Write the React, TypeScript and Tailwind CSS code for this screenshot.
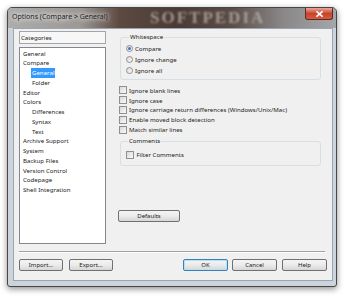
const categories: { label: string; indent?: boolean; selected?: boolean }[] = [
  { label: 'General' },
  { label: 'Compare' },
  { label: 'General', indent: true, selected: true },
  { label: 'Folder', indent: true },
  { label: 'Editor' },
  { label: 'Colors' },
  { label: 'Differences', indent: true },
  { label: 'Syntax', indent: true },
  { label: 'Text', indent: true },
  { label: 'Archive Support' },
  { label: 'System' },
  { label: 'Backup Files' },
  { label: 'Version Control' },
  { label: 'Codepage' },
  { label: 'Shell Integration' },
];

const options = [
  'Ignore blank lines',
  'Ignore case',
  'Ignore carriage return differences (Windows/Unix/Mac)',
  'Enable moved block detection',
  'Match similar lines',
];

function Checkbox() {
  return (
    <span className="w-[8px] h-[8px] shrink-0 border border-[#8f8f8f] bg-gradient-to-br from-[#d8d8d8] to-[#fbfbfb]" />
  );
}

function Radio({ checked }: { checked?: boolean }) {
  return (
    <span className="w-[7px] h-[7px] shrink-0 rounded-full border border-[#8f8f8f] bg-gradient-to-br from-[#d8d8d8] to-[#fbfbfb] flex items-center justify-center">
      {checked && <span className="w-[3px] h-[3px] rounded-full bg-[#3d78c6]" />}
    </span>
  );
}

function Button({ children, primary, className = '' }: { children: string; primary?: boolean; className?: string }) {
  return (
    <button
      className={`h-[12px] flex items-center justify-center rounded-[2px] border text-[6px] leading-none text-[#1a1a1a] bg-gradient-to-b from-[#f4f4f4] via-[#ebebeb] to-[#d6d6d6] ${
        primary ? 'border-[#3c7fb1] shadow-[inset_0_0_0_1px_#b9e1f5]' : 'border-[#707070]'
      } ${className}`}
    >
      {children}
    </button>
  );
}

export default function App() {
  return (
    <div
      className="w-[350px] h-[300px] bg-white overflow-hidden pt-[7px] pl-[7px] text-[6.1px] text-[#1b1b1b]"
      style={{ fontFamily: '"Noto Sans", "DejaVu Sans", sans-serif' }}
    >
      <div className="w-[330px] h-[280px] flex flex-col border border-[#474747] rounded-t-[5px] rounded-b-[3px] bg-[#cdd3da] shadow-[0_2px_6px_rgba(0,0,0,0.45)]">
        {/* title bar */}
        <div className="relative h-[20px] shrink-0 flex items-start rounded-t-[4px] overflow-hidden bg-[linear-gradient(to_right,#adadad_0%,#9c9894_22%,#5c4a41_34%,#4a3a33_52%,#5a4c46_68%,#8a8888_84%,#a3a6aa_100%)]">
          <span className="absolute left-[142px] top-[1px] text-[17px] leading-none font-bold tracking-[2px] text-[#bdb6b2] opacity-75 blur-[0.9px]" style={{ fontFamily: '"Liberation Serif", serif' }}>
            SOFTPEDIA
          </span>
          <span className="relative ml-[4px] mt-[4px] text-[7px] leading-[10px] text-[#202020] [text-shadow:0_0_4px_#fff,0_0_6px_#fff]">
            Options (Compare &gt; General)
          </span>
          <span className="relative ml-auto mr-[3px] w-[28px] h-[12px] flex items-center justify-center rounded-b-[3px] border border-t-0 border-[#5b2a22] bg-gradient-to-b from-[#e8a89c] via-[#c8432c] to-[#d85a3f]">
            <svg width="7" height="6" viewBox="0 0 7 6">
              <path d="M1 0.8 L6 5.2 M6 0.8 L1 5.2" stroke="#fff" strokeWidth="1.6" strokeLinecap="square" />
            </svg>
          </span>
        </div>

        {/* client area */}
        <div className="ml-[5px] mr-[3px] h-[253px] border border-[#9aa6b3] bg-[#f0f0f0] flex flex-col">
          <div className="flex pt-[2px] pl-[5px] h-[215px]">
            {/* categories */}
            <div className="w-[87px] flex flex-col shrink-0">
              <div className="h-[13px] border border-[#a5a5a5] bg-[#f7f7f7] flex items-center pl-[1px]">Categories</div>
              <div className="mt-[3px] h-[197px] border border-[#828790] bg-white pl-[3px] pt-[0.5px] leading-[9.75px]">
                {categories.map((c, i) => (
                  <div key={i} className={c.indent ? 'pl-[8px]' : ''}>
                    <span className={c.selected ? 'bg-[#3399ff] text-white px-[1px] inline-block' : c.indent ? 'px-[1px]' : ''}>
                      {c.label}
                    </span>
                  </div>
                ))}
              </div>
            </div>

            {/* options */}
            <div className="ml-[12px] w-[203px] flex flex-col">
              <fieldset className="mt-[1px] ml-[2px] border border-[#d5dfe5] rounded-[3px] pl-[5px] pb-[3px] pt-[1px]">
                <legend className="ml-[3px] px-[1px] leading-[10px]">Whitespace</legend>
                {['Compare', 'Ignore change', 'Ignore all'].map((r, i) => (
                  <div key={r} className="h-[11px] flex items-center gap-[2px]">
                    <Radio checked={i === 0} />
                    <span>{r}</span>
                  </div>
                ))}
              </fieldset>
              <div className="mt-[5.5px] ml-[1px] flex flex-col">
                {options.map((o) => (
                  <div key={o} className="h-[9.8px] flex items-center gap-[2px]">
                    <Checkbox />
                    <span>{o}</span>
                  </div>
                ))}
              </div>
              <fieldset className="mt-[2px] ml-[2px] border border-[#d5dfe5] rounded-[3px] pl-[5px] pt-[3.5px] pb-[5.5px]">
                <legend className="ml-[2px] px-[1px] leading-[10px]">Comments</legend>
                <div className="h-[10px] flex items-center gap-[2.5px]">
                  <Checkbox />
                  <span>Filter Comments</span>
                </div>
              </fieldset>
              <Button className="mt-[44px] w-[62px]">Defaults</Button>
            </div>
          </div>

          <div className="ml-[5px] mt-[7px] w-[306px] h-[2px] border-t border-[#a0a0a0] border-b border-b-white" />
          <div className="mt-[6px] px-[5px] flex items-center">
            <Button className="w-[44px]">Import...</Button>
            <Button className="w-[44px] ml-[6px]">Export...</Button>
            <Button primary className="w-[45px] ml-auto">OK</Button>
            <Button className="w-[45px] ml-[4px]">Cancel</Button>
            <Button className="w-[45px] ml-[5px]">Help</Button>
          </div>
        </div>
      </div>
    </div>
  );
}
